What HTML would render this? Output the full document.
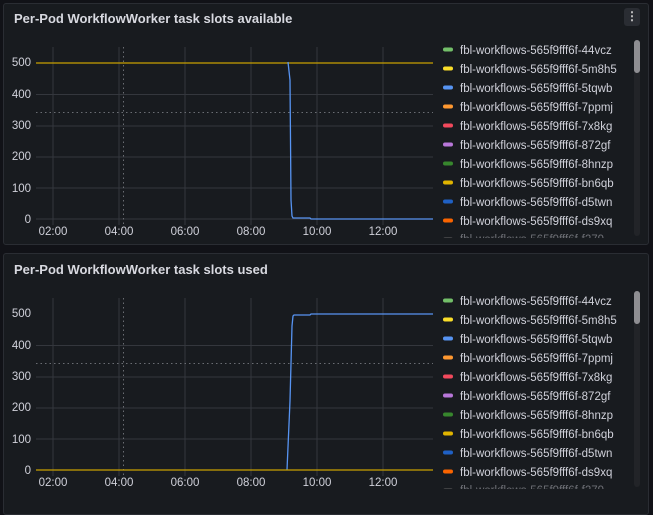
<!DOCTYPE html>
<html><head><style>
body{margin:0;width:653px;height:500px;background:#111217;overflow:hidden;font-family:"Liberation Sans",sans-serif;}
.p{position:absolute;left:3px;width:644px;background:#181b1f;border:1px solid #2a2d33;border-radius:3px;}
.t{position:absolute;left:10px;font-size:13px;font-weight:bold;color:#d8d9e0;}
svg{position:absolute;left:0;top:0}
</style></head><body>
<div class="p" style="top:3px;height:240px"><div class="t" style="top:7px">Per-Pod WorkflowWorker task slots available</div></div>
<div class="p" style="top:253px;height:260px"><div class="t" style="top:8px">Per-Pod WorkflowWorker task slots used</div></div>
<div style="position:absolute;left:624px;top:8px;width:16px;height:18px;background:#2a2d33;border-radius:3px;color:#ccc;font-size:12px;text-align:center;line-height:17px;font-weight:bold">⋮</div>
<svg width="653" height="500" font-family="Liberation Sans, sans-serif" font-size="11.5" fill="#d0d1da">
<defs>
<g id="grid">
<g stroke="#34373d" stroke-width="1">
<line x1="36" x2="433" y1="94.5" y2="94.5"/><line x1="36" x2="433" y1="126" y2="126"/><line x1="36" x2="433" y1="157" y2="157"/><line x1="36" x2="433" y1="188" y2="188"/><line x1="36" x2="433" y1="219" y2="219"/>
<line x1="53" x2="53" y1="47" y2="225"/><line x1="119" x2="119" y1="47" y2="225"/><line x1="185" x2="185" y1="47" y2="225"/><line x1="251" x2="251" y1="47" y2="225"/><line x1="317" x2="317" y1="47" y2="225"/><line x1="383" x2="383" y1="47" y2="225"/>
</g>
<g stroke="#6a6d73" stroke-dasharray="1.5 3"><line x1="36" x2="433" y1="112.5" y2="112.5"/><line x1="123.5" x2="123.5" y1="47" y2="225"/></g>
<g text-anchor="end"><text x="31" y="66">500</text><text x="31" y="98">400</text><text x="31" y="129">300</text><text x="31" y="160">200</text><text x="31" y="192">100</text><text x="31" y="223">0</text></g>
<g text-anchor="middle"><text x="53" y="235">02:00</text><text x="119" y="235">04:00</text><text x="185" y="235">06:00</text><text x="251" y="235">08:00</text><text x="317" y="235">10:00</text><text x="383" y="235">12:00</text></g>
<g>
<rect x="443" y="47.5" width="10" height="4" rx="2" fill="#73bf69"/><text x="460" y="54">fbl-workflows-565f9fff6f-44vcz</text>
<rect x="443" y="66.5" width="10" height="4" rx="2" fill="#fade2a"/><text x="460" y="73">fbl-workflows-565f9fff6f-5m8h5</text>
<rect x="443" y="85.5" width="10" height="4" rx="2" fill="#5794f2"/><text x="460" y="92">fbl-workflows-565f9fff6f-5tqwb</text>
<rect x="443" y="104.5" width="10" height="4" rx="2" fill="#ff9830"/><text x="460" y="111">fbl-workflows-565f9fff6f-7ppmj</text>
<rect x="443" y="123.5" width="10" height="4" rx="2" fill="#f2495c"/><text x="460" y="130">fbl-workflows-565f9fff6f-7x8kg</text>
<rect x="443" y="142.5" width="10" height="4" rx="2" fill="#b877d9"/><text x="460" y="149">fbl-workflows-565f9fff6f-872gf</text>
<rect x="443" y="161.5" width="10" height="4" rx="2" fill="#37872d"/><text x="460" y="168">fbl-workflows-565f9fff6f-8hnzp</text>
<rect x="443" y="180.5" width="10" height="4" rx="2" fill="#e0b400"/><text x="460" y="187">fbl-workflows-565f9fff6f-bn6qb</text>
<rect x="443" y="199.5" width="10" height="4" rx="2" fill="#1f60c4"/><text x="460" y="206">fbl-workflows-565f9fff6f-d5twn</text>
<rect x="443" y="218.5" width="10" height="4" rx="2" fill="#fa6400"/><text x="460" y="225">fbl-workflows-565f9fff6f-ds9xq</text>
<text x="460" y="243" fill="#6d6f75">fbl-workflows-565f9fff6f-f279</text>
<rect x="443" y="237.5" width="10" height="4" rx="2" fill="#666"/>
<rect x="634" y="40" width="6" height="196" rx="3" fill="#222428"/>
<rect x="634" y="40" width="6" height="33" rx="3" fill="#8e8e92"/>
</g>
</g>
<clipPath id="c1"><rect x="0" y="0" width="653" height="238"/></clipPath>
</defs>
<g clip-path="url(#c1)"><use href="#grid"/>
<line x1="36" x2="433" y1="63" y2="63" stroke="#c8a000" stroke-width="1.2"/>
<path d="M288 62 L290 80 L291 200 L292 216 L293 218 L310 218 L311 219 L433 219" stroke="#5794f2" stroke-width="1.3" fill="none"/>
</g>
<g transform="translate(0,251)"><g clip-path="url(#c1)"><use href="#grid"/>
<path d="M287 219 L290 150 L292 75 L293 65 L294 64 L310 64 L311 63 L433 63" stroke="#5794f2" stroke-width="1.3" fill="none"/>
<line x1="36" x2="433" y1="219" y2="219" stroke="#c8a000" stroke-width="1.2"/>
</g></g>
</svg>
</body></html>
